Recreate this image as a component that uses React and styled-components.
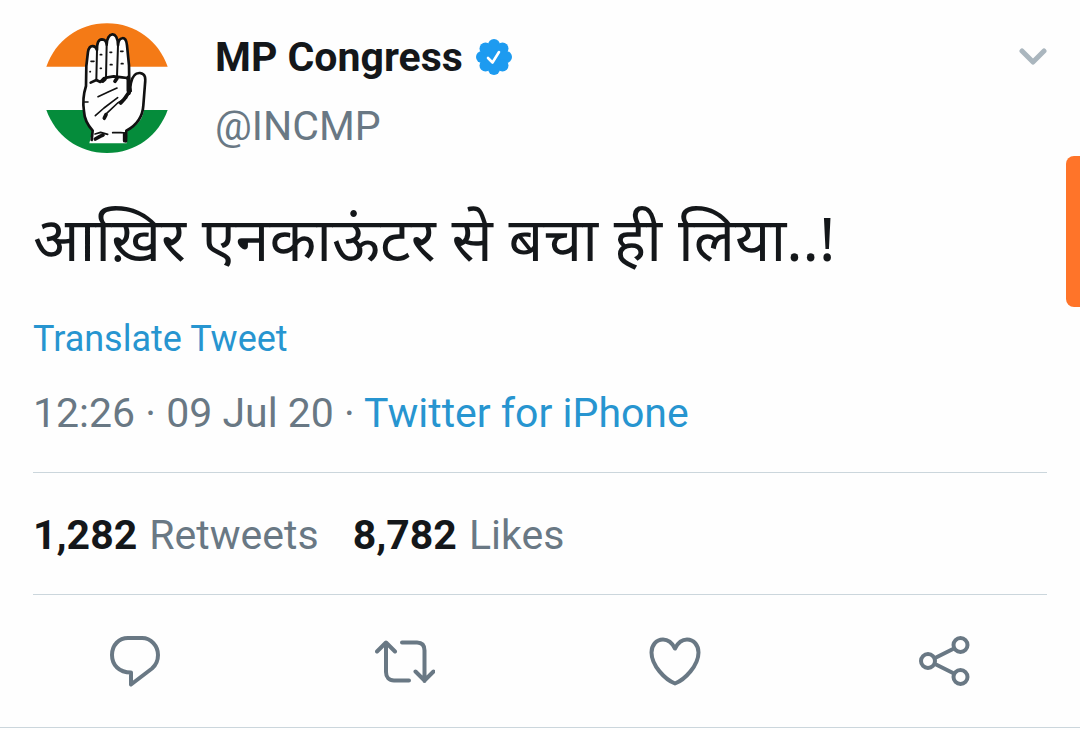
import React from 'react'
import styled, { createGlobalStyle } from 'styled-components'

const colors = {
  ink: '#14171a',
  gray: '#697884',
  chevron: '#aab6be',
  link: '#2795d0',
  verified: '#1d9bf0',
  line: '#cbd6dc',
  handle: '#ff7429',
  saffron: '#f47a16',
  green: '#058c3b'
}

const GlobalStyle = createGlobalStyle`
  body {
    margin: 0;
    background: #fefefe;
    color: ${colors.ink};
    font-family: Roboto, "Noto Sans", sans-serif;
  }

  button {
    display: flex;
    padding: 0;
    border: 0;
    background: none;
    color: inherit;
    font: inherit;
    cursor: pointer;
  }
`

const Page = styled.main`
  position: relative;
  overflow: hidden;
`

const Tweet = styled.article`
  padding: 23px 33px 0;
`

const Header = styled.header`
  display: flex;
  align-items: flex-start;
`

const Avatar = styled.svg`
  flex: none;
  width: 130px;
  height: 130px;
  margin: 0 43px 0 9px;
`

const Author = styled.div`
  flex: 1;
  display: flex;
  flex-direction: column;
  gap: 21px;
  padding-top: 10px;
  font-size: 41px;
  line-height: 48px;
`

const Name = styled.div`
  display: flex;
  align-items: center;
  gap: 13px;
  font-weight: 700;
`

const Handle = styled.div`
  color: ${colors.gray};
`

const MenuButton = styled.button`
  margin-top: 23px;
`

const Message = styled.p`
  margin: 45px 0 0;
  font-family: "Noto Sans", "Noto Sans Devanagari", sans-serif;
  font-size: 61px;
  line-height: 80px;
`

const Link = styled.a`
  color: ${colors.link};
  text-decoration: none;
`

const Translate = styled.div`
  margin-top: 37px;
  font-size: 36px;
  line-height: 48px;
`

const Meta = styled.div`
  margin-top: 26px;
  padding-bottom: 35px;
  color: ${colors.gray};
  font-size: 41px;
  line-height: 48px;
`

const Stats = styled.div`
  display: flex;
  gap: 34px;
  padding: 38px 0 35px;
  border: solid ${colors.line};
  border-width: 1px 0;
  color: ${colors.gray};
  font-size: 41px;
  line-height: 48px;
`

const Count = styled.strong`
  margin-right: 2px;
  color: ${colors.ink};
  font-weight: 700;
`

const Actions = styled.div`
  display: grid;
  grid-template-columns: repeat(4, 1fr);
  justify-items: center;
  padding: 34px 0 38px;
  margin: 0 -33px;
  border-bottom: 1px solid ${colors.line};
`

const Icon = styled.svg`
  display: block;
  width: 60px;
  height: 60px;
  fill: none;
  stroke: ${colors.gray};
  stroke-width: 4;
  stroke-linecap: round;
  stroke-linejoin: round;
`

const ScrollHandle = styled.div`
  position: absolute;
  top: 156px;
  right: -10px;
  width: 24px;
  height: 151px;
  border-radius: 8px;
  background: ${colors.handle};
`

const HandLogo = () => (
  <Avatar viewBox="22 37 390 390" role="img" aria-label="MP Congress">
    <path fill={colors.saffron} d="M35 168C62 92 130 38 217 38s155 54 182 130z" />
    <path fill={colors.green} d="M35 298C62 374 130 427 217 427s155-53 182-129z" />
    <path
      fill="#fefefe"
      d="M164 398l9-37c-15-17-25-36-26-58-5-32-2-51 6-76l2-60 5-43c4-22 22-21 27-5 0-21 3-31 15-32 10 0 13 6 14 16 0-38 34-45 34 2 2-27 24-30 27 0l6 60 1 58c5-23 12-39 32-36 17 3 19 15 17 33l-4 67c-2 35-17 58-51 71l-2 40z"
    />
    <g fill="none" stroke="#111" strokeWidth="8" strokeLinecap="round" strokeLinejoin="round">
      <path d="M171 388l3-28c-15-17-25-36-26-58-5-32-2-51 6-76l1-60 5-43c4-22 22-21 27-5 0-21 3-31 15-32 10 0 13 6 14 16 0-38 34-45 34 2 2-27 24-30 27 0l6 60 1 61" />
      <path strokeWidth="6" d="M187 118l-2 90M216 104l-2 98M250 104l-3 94" />
      <path d="M168 216l17-8 12 6 10-11 12-3 18-3 25 3 16 2 8 15 2 24M284 249l5-33c5-23 16-30 27-29 17 3 17 15 15 33l-5 64c-2 35-17 58-51 76l-1 32" />
    </g>
    <g fill="none" stroke="#111" strokeLinecap="round" strokeLinejoin="round">
      <path strokeWidth="5" d="M190 258l32-15 25-11M182 315l26-23 41-31M209 326l7-18 33-31 27-16M150 274h10M181 370l17-5 21 6M234 366h24l15 1" />
      <path strokeWidth="11" d="M258 277l11-12 15-22M204 211l7-6M281 200v40M182 385l14-8 9-4M247 203l-6 9M270 370v20M209 322l5-10" />
      <path strokeWidth="5" d="M169 152h9M166 183h1M197 132h4M197 173h3M226 125h5M227 162h5M258 122h7M260 159h5" />
    </g>
  </Avatar>
)

const VerifiedBadge = () => (
  <svg width="36" height="36" viewBox="0 0 36 36" role="img" aria-label="Verified">
    <g fill={colors.verified}>
      <circle cx="18" cy="18" r="14" />
      <circle cx="18" cy="6" r="6" />
      <circle cx="26.5" cy="9.5" r="6" />
      <circle cx="30" cy="18" r="6" />
      <circle cx="26.5" cy="26.5" r="6" />
      <circle cx="18" cy="30" r="6" />
      <circle cx="9.5" cy="26.5" r="6" />
      <circle cx="6" cy="18" r="6" />
      <circle cx="9.5" cy="9.5" r="6" />
    </g>
    <path d="M12 19l4.500 4.500L23 13" fill="none" stroke="#fff" strokeWidth="2.600" strokeLinecap="round" strokeLinejoin="round" />
  </svg>
)

const actions = [
  {
    label: 'Reply',
    icon: <path d="M23 9h14c9 0 16 8 16 17 0 6-2 10-6 13.500L26 55.500V43.500C14 43.500 7 36 7 26S14 9 23 9z" />
  },
  {
    label: 'Retweet',
    icon: <path d="M2 22.500l9-9 9 9M11 14v29c0 5 3 8.500 8 8.500h15M27 13.500h15c5 0 7.500 3 7.500 8V52M40.500 42.500l9 9 9-9" />
  },
  {
    label: 'Like',
    icon: <path d="M30 19.500c-3-6-7-9-12-9-7 0-11.500 6-11.500 13 0 13 13.500 27 23.500 31 10-4 23.500-18 23.500-31 0-7-4.500-13-11.500-13-5 0-9 3-12 9z" />
  },
  {
    label: 'Share',
    icon: (
      <>
        <circle cx="13" cy="32" r="7" />
        <circle cx="45.500" cy="16" r="7" />
        <circle cx="45.500" cy="48" r="7" />
        <path d="M20 29l19-9.500M20 35l19 9.500" />
      </>
    )
  }
]

const App = () => (
  <Page>
    <GlobalStyle />
    <Tweet>
      <Header>
        <HandLogo />
        <Author>
          <Name>
            MP Congress
            <VerifiedBadge />
          </Name>
          <Handle>@INCMP</Handle>
        </Author>
        <MenuButton aria-label="More options">
          <svg width="28" height="20" viewBox="0 0 28 20" fill="none" stroke={colors.chevron} strokeWidth="5" strokeLinecap="round" strokeLinejoin="round">
            <path d="M3 5l11 11L25 5" />
          </svg>
        </MenuButton>
      </Header>
      <Message lang="hi">आख़िर एनकाऊंटर से बचा ही लिया..!</Message>
      <Translate>
        <Link href="#translate">Translate Tweet</Link>
      </Translate>
      <Meta>
        12:26 · 09 Jul 20 · <Link href="#source">Twitter for iPhone</Link>
      </Meta>
      <Stats>
        <span><Count>1,282</Count> Retweets</span>
        <span><Count>8,782</Count> Likes</span>
      </Stats>
      <Actions>
        {actions.map(({ label, icon }) => (
          <button key={label} aria-label={label}>
            <Icon viewBox="0 0 60 60">{icon}</Icon>
          </button>
        ))}
      </Actions>
    </Tweet>
    <ScrollHandle />
  </Page>
)

export default App
